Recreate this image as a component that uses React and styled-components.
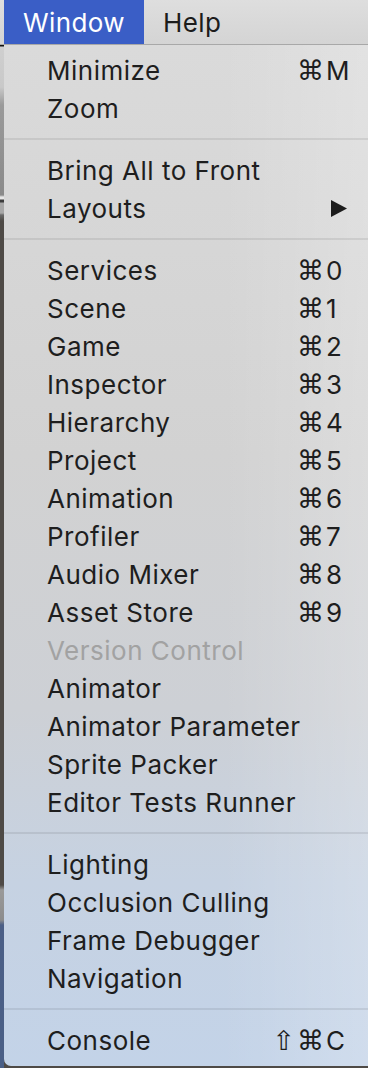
import React from 'react';
import styled, { createGlobalStyle } from "styled-components"

const GlobalStyle = createGlobalStyle`
  html, body {
    margin: 0;
    padding: 0;
    background: #4e4a46;
  }
  body {
    font-family: Inter, "Liberation Sans", sans-serif;
    -webkit-font-smoothing: antialiased;
  }
`;

const groups = [
  [
    { label: "Minimize", mods: "⌘", key: "M" },
    { label: "Zoom" },
  ],
  [
    { label: "Bring All to Front" },
    { label: "Layouts", submenu: true },
  ],
  [
    { label: "Services", mods: "⌘", key: "0" },
    { label: "Scene", mods: "⌘", key: "1" },
    { label: "Game", mods: "⌘", key: "2" },
    { label: "Inspector", mods: "⌘", key: "3" },
    { label: "Hierarchy", mods: "⌘", key: "4" },
    { label: "Project", mods: "⌘", key: "5" },
    { label: "Animation", mods: "⌘", key: "6" },
    { label: "Profiler", mods: "⌘", key: "7" },
    { label: "Audio Mixer", mods: "⌘", key: "8" },
    { label: "Asset Store", mods: "⌘", key: "9" },
    { label: "Version Control", disabled: true },
    { label: "Animator" },
    { label: "Animator Parameter" },
    { label: "Sprite Packer" },
    { label: "Editor Tests Runner" },
  ],
  [
    { label: "Lighting" },
    { label: "Occlusion Culling" },
    { label: "Frame Debugger" },
    { label: "Navigation" },
  ],
  [
    { label: "Console", mods: "⇧⌘", key: "C" },
  ],
];

const App = () => {
  return (
    <StyledScreen>
      <GlobalStyle />
      <StyledMenuBar>
        <StyledBarItem active>Window</StyledBarItem>
        <StyledBarItem>Help</StyledBarItem>
      </StyledMenuBar>
      <StyledBody>
        <StyledBehind />
        <StyledMenu>
          {groups.map((group, gi) => (
            <React.Fragment key={gi}>
              {gi > 0 && <StyledSeparator />}
              {group.map((item) => (
                <StyledRow key={item.label} disabled={item.disabled}>
                  <StyledLabel>{item.label}</StyledLabel>
                  <StyledMods>{item.mods}</StyledMods>
                  <StyledKey>
                    {item.submenu ? (
                      <svg width="18" height="17" viewBox="0 0 18 17">
                        <polygon points="1,0 17,8.5 1,17" fill="#1c1c1c" />
                      </svg>
                    ) : item.key}
                  </StyledKey>
                </StyledRow>
              ))}
            </React.Fragment>
          ))}
        </StyledMenu>
      </StyledBody>
    </StyledScreen>
  )
}

const StyledScreen = styled.div`
  width: 368px;
  height: 1068px;
  overflow: hidden;
  display: flex;
  flex-direction: column;
`;

const StyledMenuBar = styled.div`
  height: 44px;
  flex: none;
  display: flex;
  align-items: stretch;
  padding-left: 4px;
  background: linear-gradient(#dedede, #d4d4d4);
  border-bottom: 1px solid #a8a8a8;
`;

const StyledBarItem = styled.div`
  display: flex;
  align-items: center;
  justify-content: center;
  width: ${p => p.active ? "140px" : "auto"};
  padding: ${p => p.active ? "0" : "0 0 0 19px"};
  font-size: 26px;
  letter-spacing: 0.4px;
  color: ${p => p.active ? "#ffffff" : "#1c1c1c"};
  background: ${p => p.active ? "#3a5ec6" : "transparent"};
`;

const StyledBody = styled.div`
  flex: 1;
  display: flex;
  align-items: flex-start;
`;

const StyledBehind = styled.div`
  width: 4px;
  align-self: stretch;
  flex: none;
  background: linear-gradient(
    #111 0px, #111 1px,
    #cfcfcf 2px, #c9c9c9 42px,
    #9a9a9a 60px, #8a8a8a 150px,
    #e6e6e6 152px, #e6e6e6 154px,
    #3c3c3c 155px, #3c3c3c 157px,
    #a8a8a8 158px, #a8a8a8 168px,
    #6a6a6a 170px, #4e4a46 176px,
    #4e4a46 840px, #9a9a9a 845px, #8c8c8c 875px,
    #4b5f86 880px, #4a5f86 100%
  );
`;

const StyledMenu = styled.div`
  flex: 1;
  min-width: 0;
  padding: 6px 0 7px;
  border-bottom-left-radius: 7px;
  background:
    linear-gradient(90deg, rgba(255, 255, 255, 0) 60%, rgba(255, 255, 255, 0.22) 100%),
    linear-gradient(#dadada 0%, #d2d2d2 40%, #cdd0d5 65%, #c6d2e2 82%, #c3d3e8 100%);
`;

const StyledRow = styled.div`
  height: 38px;
  display: grid;
  grid-template-columns: minmax(0, 1fr) 70px 32px;
  align-items: center;
  padding: 0 10px 0 43px;
  font-size: 26px;
  letter-spacing: 0.5px;
  color: ${p => p.disabled ? "#a2a2a2" : "#1e1e1e"};
`;

const StyledLabel = styled.span`
  white-space: nowrap;
`;

const StyledMods = styled.span`
  text-align: right;
  white-space: nowrap;
  letter-spacing: 2px;
  font-family: "DejaVu Sans", sans-serif;
  font-size: 27px;
`;

const StyledKey = styled.span`
  display: flex;
  align-items: center;
  justify-content: flex-start;
  svg {
    margin-left: 4px;
  }
`;

const StyledSeparator = styled.div`
  height: 2px;
  margin: 11px 0;
  background: rgba(0, 0, 0, 0.08);
`;

export default App
